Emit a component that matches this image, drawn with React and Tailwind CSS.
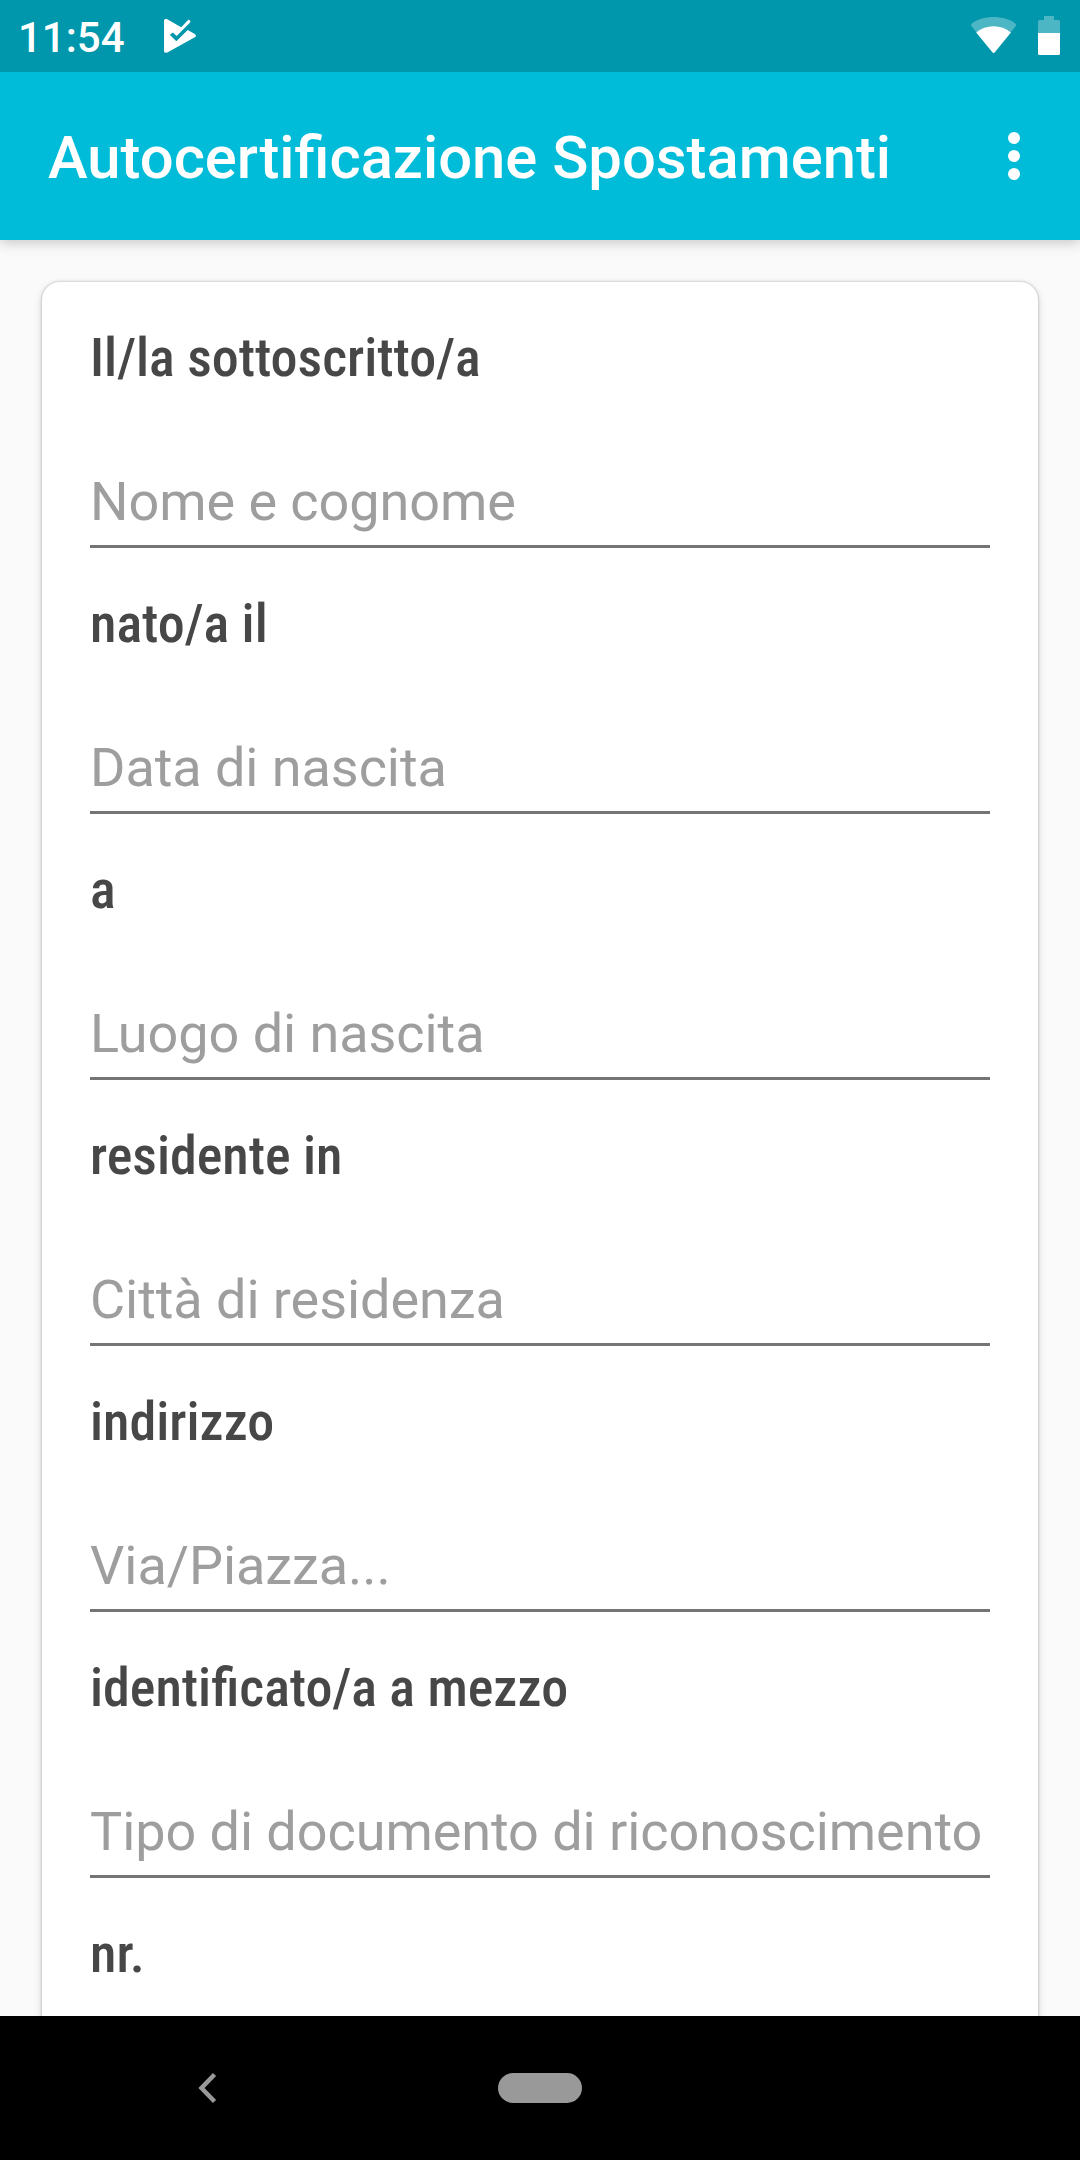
import React from 'react';

const fields = [
    { label: 'Il/la sottoscritto/a', hint: 'Nome e cognome' },
    { label: 'nato/a il', hint: 'Data di nascita' },
    { label: 'a', hint: 'Luogo di nascita' },
    { label: 'residente in', hint: 'Città di residenza' },
    { label: 'indirizzo', hint: 'Via/Piazza...' },
    { label: 'identificato/a a mezzo', hint: 'Tipo di documento di riconoscimento' },
    { label: 'nr.', hint: '' },
];

const StatusBar = () => (
    <div className="relative z-10 flex h-[72px] shrink-0 items-center justify-between bg-[#0097ac] pl-[18px] pr-5 text-white">
        <div className="flex items-center">
            <span className="w-[108px] pt-[3px] text-[42px] font-medium leading-none">11:54</span>
            <svg className="ml-[38px]" width="32" height="34" viewBox="164 19 32 34" fill="currentColor">
                <path d="M164 20.6Q164.2 18.6 166.8 19L181.2 27.2L187.6 20.4Q188.8 19.3 189.9 20.4Q190.9 21.5 189.9 22.7L176.6 36L173 32.4L169.8 34.8L176.3 41.2L187.7 30.1L194.8 33.9Q197.2 35.7 194.8 37.3L167.3 52.6Q164.5 53.5 164 51.2Z" />
            </svg>
        </div>
        {/* wifi + battery */}
        <div className="flex items-center">
            <svg width="46" height="40" viewBox="971 16 46 40" fill="currentColor">
                <path opacity="0.3" d="M971.4 26.1Q970.5 24.5 972 23.4C983 15 1004 15 1015.2 23.4Q1016.7 24.5 1015.8 26.1L994.8 52.2Q993.6 53.6 992.4 52.2Z" />
                <path d="M976.2 32.4C986 24.2 1001.2 24.2 1010.9 32.4L994.8 52.2Q993.6 53.6 992.4 52.2Z" />
            </svg>
            <svg className="ml-[21px]" width="22" height="40" viewBox="1038 16 22 40" fill="currentColor">
                <path opacity="0.3" d="M1044 16h10v4h4.500q1.500 0 1.500 1.500V33h-22V21.500q0-1.500 1.500-1.500H1044Z" />
                <path d="M1038 33h22v20.500q0 1.500-1.500 1.500h-19q-1.500 0-1.500-1.500Z" />
            </svg>
        </div>
    </div>
);

const Toolbar = () => (
    <header className="flex h-[168px] shrink-0 items-center justify-between bg-[#00bcd8] pl-12 pr-[60px] text-white shadow-[0_3px_12px_rgba(0,0,0,0.2)]">
        <h1 className="pt-1.5 text-[59.75px] font-medium leading-none">Autocertificazione Spostamenti</h1>
        <div className="flex flex-col gap-1.5">
            <span className="size-3 rounded-full bg-white"></span>
            <span className="size-3 rounded-full bg-white"></span>
            <span className="size-3 rounded-full bg-white"></span>
        </div>
    </header>
);

const Field = ({ label, hint }) => (
    <div className="h-[266px] shrink-0">
        <p className="font-['Roboto_Condensed','Roboto',sans-serif] text-[54px] font-medium leading-[70px] text-[#474747]">{label}</p>
        {hint && (
            <div className="mt-[74px] h-[81px] border-b-3 border-[#757575]">
                <p className="whitespace-nowrap text-[54px] leading-[70px] tracking-[-0.06px] text-[#9e9e9e]">{hint}</p>
            </div>
        )}
    </div>
);

const NavBar = () => (
    <nav className="grid h-36 shrink-0 grid-cols-[1fr_84px_1fr] items-center bg-black">
        <svg className="ml-[198px]" width="19" height="32" viewBox="0 0 19 32" fill="none" stroke="#999" strokeWidth="4.5">
            <path d="M16.500 2.500L3.500 16L16.500 29.500" />
        </svg>
        <span className="h-[30px] rounded-[15px] bg-[#999]"></span>
    </nav>
);

const App = () => (
    <div className="flex h-[2160px] w-[1080px] flex-col overflow-hidden bg-[#fafafa] font-['Roboto',sans-serif]">
        <StatusBar />
        <Toolbar />
        <main className="min-h-0 flex-1 overflow-hidden px-[42px] pt-[42px]">
            <div className="flex h-[2000px] flex-col rounded-[18px] bg-white px-12 pt-[41px] shadow-[0_0_3px_rgba(0,0,0,0.26),0_3px_8px_rgba(0,0,0,0.16)]">
                {fields.map((field) => (
                    <Field key={field.label} label={field.label} hint={field.hint} />
                ))}
            </div>
        </main>
        <NavBar />
    </div>
);

export default App;
